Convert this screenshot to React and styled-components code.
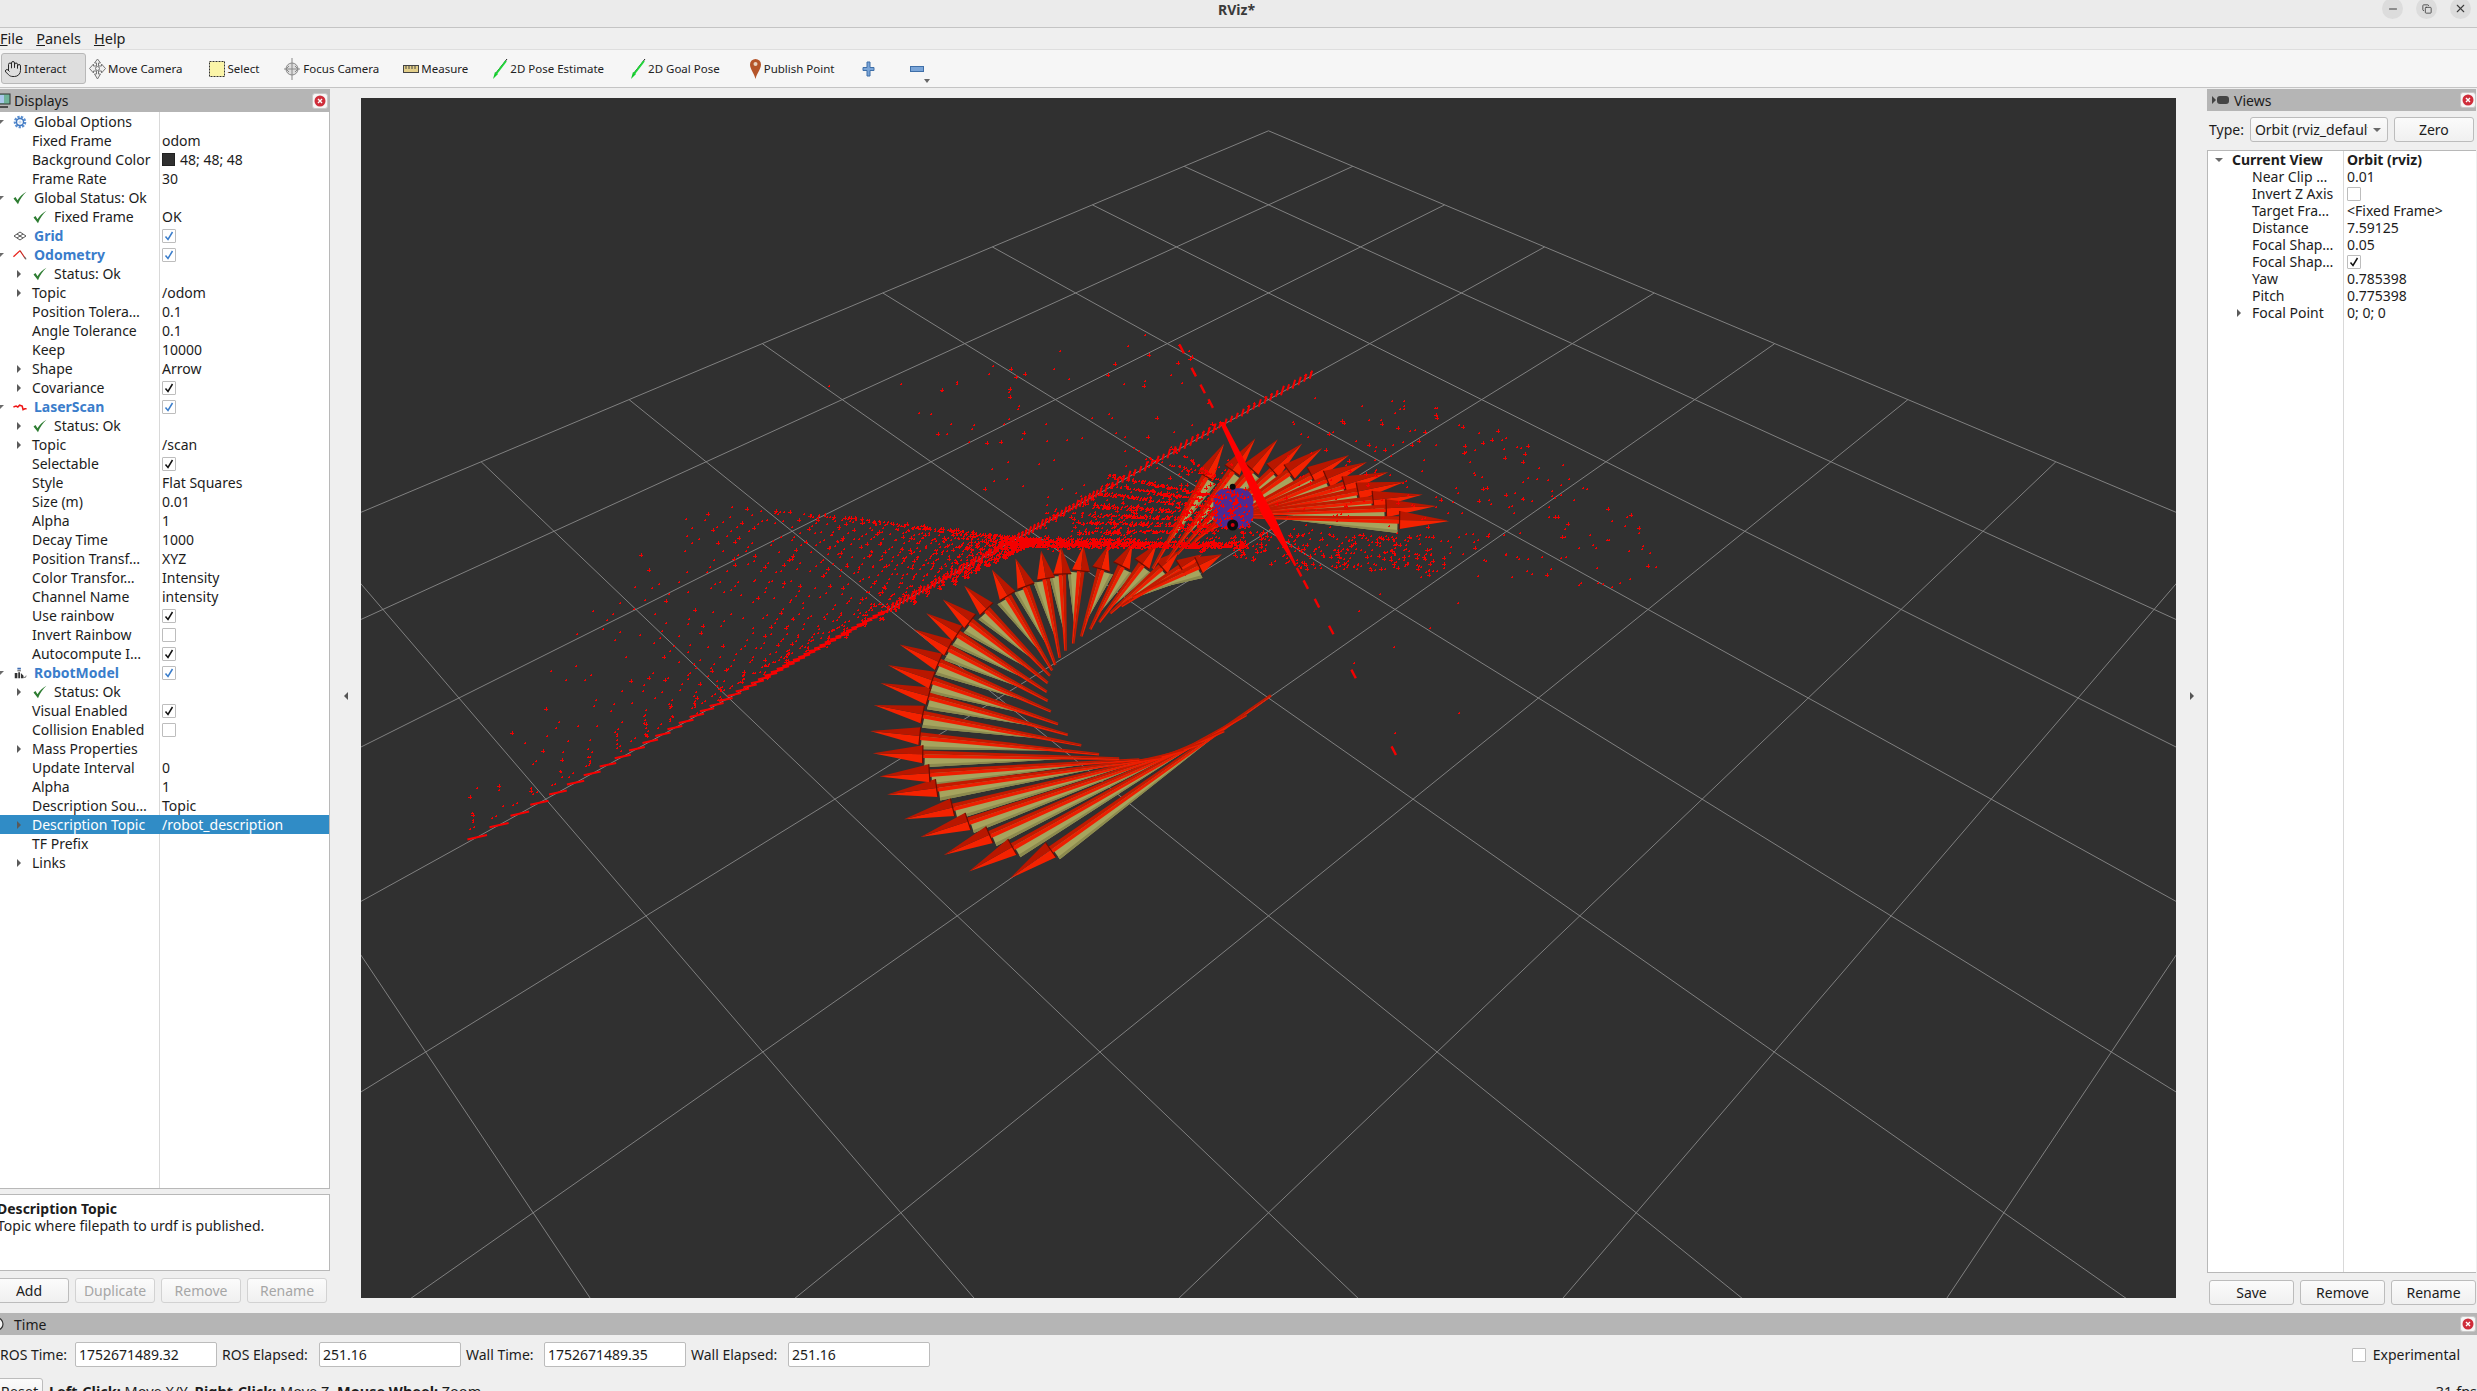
import React from "react";
import styled, { createGlobalStyle } from "styled-components";
import { Minus, X, Copy, Hand } from "lucide-react";

const GlobalStyle = createGlobalStyle`
  html, body { margin: 0; padding: 0; overflow: hidden; background: #efefef; }
  * { box-sizing: border-box; }
`;

const displayRows = [
  { name: "Global Options", top: true, open: true, icon: "gear" },
  { name: "Fixed Frame", value: "odom" },
  { name: "Background Color", color: "#303030", value: "48; 48; 48" },
  { name: "Frame Rate", value: "30" },
  { name: "Global Status: Ok", top: true, open: true, icon: "ok" },
  { name: "Fixed Frame", value: "OK", icon: "ok" },
  { name: "Grid", top: true, blue: true, icon: "grid", check: "blue" },
  { name: "Odometry", top: true, open: true, blue: true, icon: "odom", check: "blue" },
  { name: "Status: Ok", arrow: true, icon: "ok" },
  { name: "Topic", arrow: true, value: "/odom" },
  { name: "Position Tolera…", value: "0.1" },
  { name: "Angle Tolerance", value: "0.1" },
  { name: "Keep", value: "10000" },
  { name: "Shape", arrow: true, value: "Arrow" },
  { name: "Covariance", arrow: true, check: "on" },
  { name: "LaserScan", top: true, open: true, blue: true, icon: "laser", check: "blue" },
  { name: "Status: Ok", arrow: true, icon: "ok" },
  { name: "Topic", arrow: true, value: "/scan" },
  { name: "Selectable", check: "on" },
  { name: "Style", value: "Flat Squares" },
  { name: "Size (m)", value: "0.01" },
  { name: "Alpha", value: "1" },
  { name: "Decay Time", value: "1000" },
  { name: "Position Transf…", value: "XYZ" },
  { name: "Color Transfor…", value: "Intensity" },
  { name: "Channel Name", value: "intensity" },
  { name: "Use rainbow", check: "on" },
  { name: "Invert Rainbow", check: "off" },
  { name: "Autocompute I…", check: "on" },
  { name: "RobotModel", top: true, open: true, blue: true, icon: "robot", check: "blue" },
  { name: "Status: Ok", arrow: true, icon: "ok" },
  { name: "Visual Enabled", check: "on" },
  { name: "Collision Enabled", check: "off" },
  { name: "Mass Properties", arrow: true },
  { name: "Update Interval", value: "0" },
  { name: "Alpha", value: "1" },
  { name: "Description Sou…", value: "Topic" },
  { name: "Description Topic", arrow: true, value: "/robot_description", selected: true },
  { name: "TF Prefix" },
  { name: "Links", arrow: true },
];

const viewRows = [
  { name: "Near Clip …", value: "0.01" },
  { name: "Invert Z Axis", check: "off" },
  { name: "Target Fra…", value: "<Fixed Frame>" },
  { name: "Distance", value: "7.59125" },
  { name: "Focal Shap…", value: "0.05" },
  { name: "Focal Shap…", check: "on" },
  { name: "Yaw", value: "0.785398" },
  { name: "Pitch", value: "0.775398" },
  { name: "Focal Point", value: "0; 0; 0", arrow: true },
];

/* ---------- 3D view data ---------- */

const VW = 1815;
const VH = 1200;

// rviz orbit camera: yaw 0.785398, pitch 0.775398, distance 7.59125, fovy 45deg
const project = (x, y) => {
  const d = 7.59125;
  const cy = Math.cos(0.785398), sy = Math.sin(0.785398);
  const cp = Math.cos(0.775398), sp = Math.sin(0.775398);
  const depth = d - (x * cy * cp + y * sy * cp);
  const up = -x * sp * cy - y * sp * sy;
  const right = -x * sy + y * cy;
  const k = (VH / 2) / Math.tan(Math.PI / 8) / depth;
  return [VW / 2 + right * k, VH / 2 - up * k];
};

const gridLines = [];
for (let i = -5; i <= 5; i++) {
  gridLines.push([project(i, -5), project(i, 5)]);
  gridLines.push([project(-5, i), project(5, i)]);
}

// helpers to turn crop coordinates into viewport coordinates
const Z = (x, y) => [800 + x / 2.24 - 361, 340 + y / 2.8 - 98];
const L = (x, y) => [440 + x / 2.24 - 361, 440 + y / 3 - 98];
const R = (x, y) => [1200 + x / 3 - 361, 340 + y / 3 - 98];
const S = (x, y) => [x * 1.58 - 361, y * 1.58 - 98];

const arrowPairs = [
  [470, 1508, 1055, 995], [378, 1488, 1000, 1050], [322, 1442, 950, 1095], [270, 1392, 900, 1130],
  [233, 1342, 860, 1150], [195, 1273, 810, 1170], [178, 1222, 760, 1175], [163, 1157, 715, 1172],
  [157, 1095, 670, 1160], [165, 1022, 630, 1135], [180, 960, 600, 1105], [197, 910, 578, 1075],
  [223, 853, 562, 1040], [255, 810, 555, 1010], [283, 765, 553, 985], [320, 727, 555, 960],
  [368, 688, 560, 940], [430, 643, 565, 925], [483, 612, 572, 910], [540, 590, 582, 890],
  [585, 580, 595, 870], [635, 575, 612, 850], [690, 575, 630, 830], [745, 570, 650, 810],
  [800, 570, 670, 790], [850, 590, 695, 765], [900, 600, 720, 745], [945, 600, 745, 720],
  [950, 290, 790, 640], [1020, 275, 820, 620], [1070, 278, 845, 600], [1125, 290, 870, 580],
  [1170, 302, 885, 560], [1230, 322, 905, 540], [1270, 342, 925, 525], [1318, 370, 940, 510],
  [1355, 397, 950, 500], [1395, 433, 960, 490], [1425, 465, 970, 490], [1455, 507, 985, 495],
];

const pts = (list) => list.map((p) => `${p[0].toFixed(1)},${p[1].toFixed(1)}`).join(" ");

const arrows = arrowPairs.map(([tx, ty, bx, by]) => {
  const tip = Z(tx, ty);
  const tail = Z(bx, by);
  const dx = tip[0] - tail[0], dy = tip[1] - tail[1];
  const len = Math.hypot(dx, dy);
  const ux = dx / len, uy = dy / len;
  // n is the side of the arrow that faces down on screen
  let nx = -uy, ny = ux;
  if (ny < 0 || (Math.abs(ny) < 0.15 && nx > 0)) { nx = -nx; ny = -ny; }
  const head = Math.min(50, len * 0.26);
  const base = [tip[0] - ux * head, tip[1] - uy * head];
  const end = [base[0] - ux * 2, base[1] - uy * 2];
  const start = [tail[0] + ux * len * 0.15, tail[1] + uy * len * 0.15];
  const at = (p, s) => [p[0] + nx * s, p[1] + ny * s];
  return {
    olive: pts([start, at(end, -1), at(end, 13)]),
    oliveDark: pts([start, at(end, 10), at(end, 13)]),
    shaftLight: pts([tail, at(tail, 1.3), at(base, 3.8), base]),
    shaftDark: pts([tail, at(tail, -1.3), at(base, -3.8), base]),
    headLight: pts([tip, base, at(base, 9)]),
    headDark: pts([tip, base, at(base, -9)]),
    cap: [at(base, -9), at(base, 9)],
  };
});

/* ---------- laser points ---------- */

let seed = 20250716;
const rnd = () => {
  seed = (seed + 0x6d2b79f5) | 0;
  let t = Math.imul(seed ^ (seed >>> 15), 1 | seed);
  t = (t + Math.imul(t ^ (t >>> 7), 61 | t)) ^ t;
  return ((t ^ (t >>> 14)) >>> 0) / 4294967296;
};

const inside = (poly, x, y) => {
  let hit = false;
  for (let i = 0, j = poly.length - 1; i < poly.length; j = i++) {
    const [xi, yi] = poly[i], [xj, yj] = poly[j];
    if (yi > y !== yj > y && x < ((xj - xi) * (y - yi)) / (yj - yi) + xi) hit = !hit;
  }
  return hit;
};

let dotPath = "";
const dot = (x, y, r = 1) => {
  const a = Math.round(x), b = Math.round(y);
  dotPath += `M${a - r} ${b}h${2 * r}M${a} ${b - r}v${2 * r}`;
};

const scatter = (poly, count) => {
  const xs = poly.map((p) => p[0]), ys = poly.map((p) => p[1]);
  const x0 = Math.min(...xs), x1 = Math.max(...xs), y0 = Math.min(...ys), y1 = Math.max(...ys);
  let made = 0, guard = 0;
  while (made < count && guard < count * 60) {
    guard++;
    const x = x0 + rnd() * (x1 - x0), y = y0 + rnd() * (y1 - y0);
    if (!inside(poly, x, y)) continue;
    dot(x, y, rnd() > 0.75 ? 2 : 1);
    made++;
  }
};

const scatterLine = (a, b, count, spread, r = 1) => {
  for (let i = 0; i < count; i++) {
    const t = rnd();
    dot(a[0] + (b[0] - a[0]) * t + (rnd() - 0.5) * spread, a[1] + (b[1] - a[1]) * t + (rnd() - 0.5) * spread, r);
  }
};

// left cloud: a fan of points opening from near the robot towards the wall line
{
  const apex = L(1345, 300);
  const outer = [L(880, 225), L(590, 195), L(455, 330), L(330, 530), L(170, 850), L(65, 1065), L(70, 1150)];
  const wallEnd = L(110, 1175);
  for (let i = 0; i <= 70; i++) {
    const u = (i / 70) * (outer.length - 1);
    const k = Math.min(Math.floor(u), outer.length - 2);
    const f = u - k;
    const e = [outer[k][0] + (outer[k + 1][0] - outer[k][0]) * f, outer[k][1] + (outer[k + 1][1] - outer[k][1]) * f];
    for (let j = 1; j <= 36; j++) {
      const v = Math.pow(j / 36, 2);
      if (rnd() < 0.1 + v * 0.55) continue;
      const x = apex[0] + (e[0] - apex[0]) * v + (rnd() - 0.5) * 5;
      const y = apex[1] + (e[1] - apex[1]) * v + (rnd() - 0.5) * 4;
      if (inside([apex, ...outer, wallEnd], x, y)) dot(x, y, rnd() > 0.82 ? 2 : 1);
    }
  }
}

// right cloud, and the tighter band under the last arrows
scatter([R(300, 170), R(730, 180), R(1060, 350), R(1330, 540), R(1390, 700), R(1240, 745), R(900, 720), R(600, 710), R(400, 700), R(160, 640)], 260);
scatter([R(100, 570), R(700, 590), R(700, 690), R(300, 690), R(100, 650)], 240);
scatter([S(560, 245), S(640, 222), S(737, 200), S(790, 270), S(740, 320), S(640, 328)], 90);
scatter([S(660, 320), S(780, 290), S(790, 345), S(660, 350)], 320);
scatter([R(40, 445), R(160, 445), R(160, 565), R(40, 565)], 90);

// rays from the robot, going left
[380, 405, 430, 465, 490, 512, 538].forEach((y, i) => {
  const a = Z(935, 440 + i * 16);
  const b = Z(690 - i * 10, y);
  scatterLine(a, b, 120, 3.5);
});
[[935, 385, 770, 330], [950, 400, 830, 300], [930, 560, 900, 590]].forEach(([a, b, c, d]) => {
  scatterLine(Z(a, b), Z(c, d), 35, 3);
});

// dense band running into the left cloud
scatterLine(Z(470, 572), Z(1000, 575), 900, 6);
scatterLine(L(1250, 305), L(1568, 305), 300, 7);

// sparse points in the open
[[882, 92], [1330, 860], [1477, 1045], [1333, 1100], [1242, 905], [1412, 805], [1473, 735], [1300, 712], [1252, 760], [65, 130], [352, 117], [266, 205], [385, 248]].forEach(([x, y]) => {
  const p = Z(x, y);
  dot(p[0], p[1]);
});

// the long wall line: flat dashes close to the camera, small upright ticks far away
let wallPath = "";
{
  const a = L(48, 1218);
  const b = S(830, 237);
  const dist = Math.hypot(b[0] - a[0], b[1] - a[1]);
  let s = 18;
  while (s < dist) {
    const t = s / dist;
    const x = a[0] + (b[0] - a[0]) * t, y = a[1] + (b[1] - a[1]) * t;
    if (t < 0.5) {
      const half = 10 - t * 10;
      wallPath += `M${(x - half).toFixed(1)} ${(y + half * 0.22).toFixed(1)}L${(x + half).toFixed(1)} ${(y - half * 0.22).toFixed(1)}`;
      if (rnd() < 0.8) {
        dot(x - 7 * (1 - t), y - 6 - rnd() * 3);
        dot(x - 3 * (1 - t), y - 8 - rnd() * 3);
      }
      s += Math.max(6, 26 * (1 - t / 0.5));
    } else {
      const half = 3 + rnd() * 2;
      wallPath += `M${(x - half * 0.3).toFixed(1)} ${(y + half).toFixed(1)}L${(x + half * 0.3).toFixed(1)} ${(y - half).toFixed(1)}`;
      if (rnd() < 0.5) dot(x, y - 3, 1);
      s += t < 0.75 ? 4.5 : 6.5;
    }
  }
}

// the second wall, seen nearly edge on: dashes at both ends
const dashes = [[855, 25], [882, 90], [902, 137], [920, 178], [1105, 620], [1118, 650], [1133, 685], [1158, 737], [1190, 812], [1240, 935], [1330, 1150]];

/* ---------- styled parts ---------- */

const Page = styled.div`
  width: 2481px;
  height: 1391px;
  margin-left: -4px;
  display: flex;
  flex-direction: column;
  overflow: hidden;
  background: #efefef;
  color: #1c1c1c;
  font-family: "Noto Sans", "Open Sans", sans-serif;
  font-size: 14px;
`;

const TitleBar = styled.div`
  height: 28px;
  flex: none;
  display: grid;
  grid-template-columns: 1fr auto 1fr;
  background: #ebebeb;
  border-bottom: 1px solid #c4c4c4;
`;

const Title = styled.div`
  font-weight: 700;
  font-size: 14px;
  line-height: 19px;
  color: #3a3a3a;
`;

const WindowButtons = styled.div`
  display: flex;
  justify-content: flex-end;
  gap: 13px;
  padding-right: 6px;
  margin-top: -2px;
`;

const WindowButton = styled.div`
  width: 21px;
  height: 21px;
  border-radius: 50%;
  background: #dcdcdc;
  display: flex;
  align-items: center;
  justify-content: center;
  color: #3c3c3c;
`;

const MenuBar = styled.div`
  height: 22px;
  flex: none;
  display: flex;
  gap: 13px;
  padding: 0 0 2px 4px;
  align-items: center;
  background: #efefef;
  border-bottom: 1px solid #dedede;
  font-size: 14.5px;
`;

const MenuItem = styled.span`
  &::first-letter { text-decoration: underline; }
`;

const ToolBar = styled.div`
  height: 38px;
  flex: none;
  display: flex;
  align-items: center;
  padding-left: 5px;
  background: #f6f6f6;
  border-bottom: 1px solid #c4c4c4;
  font-size: 11.5px;
`;

const ToolButton = styled.div`
  height: 31px;
  display: flex;
  align-items: center;
  gap: 2px;
  white-space: nowrap;
  color: #222;
  padding: ${(p) => (p.$active ? "0 14px 0 2px" : p.$tight ? "0 12px 0 2px" : "0 11px")};
  margin-left: ${(p) => p.$ml || 0}px;
  width: ${(p) => (p.$active ? "85px" : "auto")};
  background: ${(p) => (p.$active ? "#dedede" : "transparent")};
  border: 1px solid ${(p) => (p.$active ? "#b8b8b8" : "transparent")};
  border-radius: 3px;
`;

const ToolGap = styled.div`
  position: relative;
  width: ${(p) => p.$w}px;
  margin-left: ${(p) => p.$ml || 0}px;
  display: flex;
  align-items: center;
`;

const MoreArrow = styled.div`
  position: absolute;
  right: -4px;
  bottom: -11px;
  border-left: 3px solid transparent;
  border-right: 3px solid transparent;
  border-top: 4px solid #666;
`;

const Main = styled.div`
  flex: 1;
  min-height: 0;
  display: flex;
`;

const LeftDock = styled.div`
  width: 334px;
  flex: none;
  display: flex;
  flex-direction: column;
  padding-top: 1px;
`;

const DockTitle = styled.div`
  height: ${(p) => p.$h || 23}px;
  flex: none;
  display: flex;
  align-items: center;
  gap: ${(p) => p.$gap || 5}px;
  padding: ${(p) => p.$pad};
  background: #b5b5b5;
  color: #1c1c1c;
`;

const DockLabel = styled.span`
  flex: 1;
`;

const CloseBox = styled.div`
  width: 16px;
  height: 16px;
  border-radius: 3px;
  background: #f6f6f6;
  border: 1px solid #c9c9c9;
  display: flex;
  align-items: center;
  justify-content: center;
`;

const TreePanel = styled.div`
  flex: 1;
  min-height: 0;
  position: relative;
  background: #fff;
  border-right: 1px solid #b8b8b8;
  border-bottom: 1px solid #b8b8b8;
  overflow: hidden;
`;

const ColumnLine = styled.div`
  position: absolute;
  top: 0;
  bottom: 0;
  left: ${(p) => p.$x}px;
  width: 1px;
  background: #d9d9d9;
`;

const Row = styled.div`
  position: relative;
  height: ${(p) => p.$h}px;
  display: flex;
  align-items: center;
  white-space: nowrap;
  background: ${(p) => (p.$selected ? "#308cc6" : "transparent")};
  color: ${(p) => (p.$selected ? "#fff" : "#1c1c1c")};
`;

const NameCell = styled.div`
  width: ${(p) => p.$w}px;
  flex: none;
  height: 100%;
  display: flex;
  align-items: center;
  padding-left: ${(p) => p.$pad}px;
  font-weight: ${(p) => (p.$strong ? 700 : 400)};
  color: ${(p) => (p.$blue ? "#3a7dcb" : "inherit")};
`;

const ValueCell = styled.div`
  flex: 1;
  display: flex;
  align-items: center;
  gap: 5px;
  padding-left: 3px;
  font-weight: ${(p) => (p.$strong ? 700 : 400)};
`;

const ArrowSlot = styled.div`
  width: ${(p) => p.$w || 8}px;
  flex: none;
  display: flex;
  justify-content: center;
`;

const ArrowRight = styled.div`
  border-top: 4px solid transparent;
  border-bottom: 4px solid transparent;
  border-left: 4px solid #5a5a5a;
`;

const ArrowDown = styled.div`
  border-left: 4px solid transparent;
  border-right: 4px solid transparent;
  border-top: 4px solid #6a6a6a;
`;

const IconSlot = styled.div`
  width: 14px;
  height: 14px;
  flex: none;
  margin-left: ${(p) => p.$ml}px;
  margin-right: 7px;
  display: flex;
  align-items: center;
  justify-content: center;
`;

const PlainName = styled.span`
  margin-left: ${(p) => p.$ml || 0}px;
`;

const Box = styled.div`
  width: 14px;
  height: 14px;
  background: #fff;
  border: 1px solid #bdbdbd;
  border-radius: 1px;
  display: flex;
  align-items: center;
  justify-content: center;
`;

const Swatch = styled.div`
  width: 13px;
  height: 13px;
  background: ${(p) => p.$c};
  border: 1px solid #222;
`;

const SplitDots = styled.div`
  height: 5px;
  flex: none;
`;

const HelpBox = styled.div`
  height: 77px;
  flex: none;
  background: #fff;
  border: 1px solid #b8b8b8;
  border-left: none;
  padding: 5px 0 0 1px;
  line-height: 17px;
`;

const HelpTitle = styled.div`
  font-weight: 700;
`;

const ButtonRow = styled.div`
  flex: none;
  display: grid;
  grid-template-columns: ${(p) => p.$cols};
  gap: 6px;
  padding: ${(p) => p.$pad};
  margin-left: ${(p) => p.$ml || 0}px;
`;

const PushButton = styled.div`
  height: 25px;
  display: flex;
  align-items: center;
  justify-content: center;
  border: 1px solid ${(p) => (p.$off ? "#d2d2d2" : "#bcbcbc")};
  border-radius: 3px;
  background: linear-gradient(#fbfbfb, #f0f0f0);
  color: ${(p) => (p.$off ? "#a6a6a6" : "#1c1c1c")};
`;

const SideStrip = styled.div`
  width: 31px;
  flex: none;
  display: flex;
  align-items: center;
  justify-content: center;
  padding-bottom: 9px;
`;

const StripLeft = styled.div`
  border-top: 4px solid transparent;
  border-bottom: 4px solid transparent;
  border-right: 4px solid #555;
`;

const StripRight = styled.div`
  border-top: 4px solid transparent;
  border-bottom: 4px solid transparent;
  border-left: 4px solid #555;
`;

const Viewport = styled.div`
  width: ${VW}px;
  height: ${VH}px;
  flex: none;
  margin-top: 10px;
  background: #303030;
`;

const RightDock = styled.div`
  flex: 1;
  min-width: 0;
  display: flex;
  flex-direction: column;
  padding-top: 1px;
  padding-right: 1px;
`;

const TypeRow = styled.div`
  flex: none;
  height: 25px;
  margin: 6px 0 8px;
  padding-left: 2px;
  display: flex;
  align-items: center;
  gap: 6px;
`;

const ComboBox = styled.div`
  width: 138px;
  height: 25px;
  display: flex;
  align-items: center;
  padding: 0 6px 0 4px;
  gap: 5px;
  border: 1px solid #bcbcbc;
  border-radius: 3px;
  background: linear-gradient(#fbfbfb, #f0f0f0);
  overflow: hidden;
  white-space: nowrap;
`;

const ComboText = styled.span`
  flex: 1;
  overflow: hidden;
`;

const ZeroButton = styled(PushButton)`
  width: 80px;
`;

const ViewsTree = styled(TreePanel)`
  border: 1px solid #b8b8b8;
  border-right: none;
`;

const TimeDock = styled.div`
  height: 78px;
  flex: none;
  display: flex;
  flex-direction: column;
`;

const TimeRow = styled.div`
  margin-top: 7px;
  height: 25px;
  flex: none;
  display: flex;
  align-items: center;
  gap: 5px;
  padding-left: 4px;
`;

const TimeLabel = styled.span`
  width: ${(p) => p.$w}px;
  white-space: nowrap;
`;

const TimeInput = styled.div`
  width: 142px;
  height: 25px;
  display: flex;
  align-items: center;
  padding-left: 3px;
  background: #fff;
  border: 1px solid #bcbcbc;
  border-radius: 2px;
`;

const Experimental = styled.div`
  margin-left: auto;
  padding-right: 17px;
  display: flex;
  align-items: center;
  gap: 7px;
`;

const StatusRow = styled.div`
  margin-top: 11px;
  height: 25px;
  flex: none;
  display: flex;
  align-items: center;
  gap: 6px;
  font-size: 14.5px;
`;

const ResetButton = styled(PushButton)`
  width: 47px;
`;

const Fps = styled.span`
  margin-left: auto;
`;

const ClockSvg = styled.svg`
  margin-left: -6px;
  flex: none;
`;

/* ---------- icons ---------- */

const CloseIcon = () => (
  <CloseBox>
    <svg width="12" height="12" viewBox="0 0 12 12">
      <circle cx="6" cy="6" r="5.5" fill="#cf2d3a" />
      <path d="M4 4l4 4M8 4l-4 4" stroke="#fff" strokeWidth="1.4" />
    </svg>
  </CloseBox>
);

const OkIcon = () => (
  <svg width="14" height="14" viewBox="0 0 14 14">
    <path d="M0.500 7.500l2-1.500 2 3.200C6.500 6 9.500 3 13.500 0.800 10 4 7 8 5 13.200z" fill="#2e7d32" />
  </svg>
);

const GearIcon = () => (
  <svg width="14" height="14" viewBox="0 0 14 14">
    <circle cx="7" cy="7" r="5" fill="none" stroke="#5b8fd0" strokeWidth="2.6" strokeDasharray="2.200 1.200" />
    <circle cx="7" cy="7" r="3.500" fill="none" stroke="#3f78c0" strokeWidth="1.400" />
    <circle cx="7" cy="7" r="1.600" fill="#c7d9ef" />
  </svg>
);

const GridIcon = () => (
  <svg width="14" height="10" viewBox="0 0 14 10" fill="none" stroke="#555" strokeWidth="1">
    <path d="M7 1l6 4-6 4-6-4zM4 3l6 4M10 3L4 7" />
  </svg>
);

const OdomIcon = () => (
  <svg width="16" height="12" viewBox="0 0 16 12" fill="none">
    <path d="M0.500 8L8 1" stroke="#e8221a" strokeWidth="1.500" />
    <path d="M8 1l6 9" stroke="#c8221a" strokeWidth="1.300" />
    <path d="M13 8l2 3" stroke="#666" strokeWidth="1.200" />
  </svg>
);

const LaserIcon = () => (
  <svg width="16" height="10" viewBox="0 0 16 10" fill="none">
    <path d="M0.500 5l3-1 2 1 2-2 3 1 1 4 2-1h2" stroke="#ee1515" strokeWidth="1.800" />
  </svg>
);

const RobotIcon = () => (
  <svg width="16" height="14" viewBox="0 0 16 14">
    <rect x="5" y="1" width="4" height="2" fill="#3d6bb0" />
    <rect x="5" y="4" width="4" height="1" fill="#333" />
    <path d="M2 7h3v6H2zM6 6h2v7H6zM9 7l3 3v3H9z" fill="#333" />
    <path d="M12 12q3 1 3-2" stroke="#666" fill="none" />
  </svg>
);

const MonitorIcon = () => (
  <svg width="16" height="16" viewBox="0 0 16 16">
    <rect x="1" y="1" width="13" height="10" fill="#6fb39a" stroke="#333" />
    <rect x="2" y="2" width="6" height="8" fill="#a9c7ea" />
    <path d="M4 14h8" stroke="#333" strokeWidth="1.600" />
  </svg>
);

const ClockIcon = () => (
  <ClockSvg width="14" height="14" viewBox="0 0 14 14" fill="#f4f4f4" stroke="#333" strokeWidth="1.200">
    <circle cx="7" cy="7" r="6" />
    <path d="M4 7h6" />
  </ClockSvg>
);

const CameraIcon = () => (
  <svg width="17" height="10" viewBox="0 0 17 10">
    <path d="M0 1l4 4-4 4z" fill="#444" />
    <rect x="5" y="1" width="12" height="8" rx="3" fill="#444" />
  </svg>
);

const TickIcon = ({ color }) => (
  <svg width="10" height="10" viewBox="0 0 10 10" fill="none">
    <path d="M1.500 5.500L4 8.500 8.500 1" stroke={color} strokeWidth="1.500" />
  </svg>
);

const MoveIcon = () => (
  <svg width="17" height="22" viewBox="0 0 17 22" fill="#eee" stroke="#777">
    <path d="M8.500 1l3 4h-2v3h3V6l4 4.500-4 4.500v-2h-3v3h2l-3 5-3-5h2v-3h-3v2l-4-4.500 4-4.500v2h3V5h-2z" />
    <circle cx="8.500" cy="10.500" r="2" />
  </svg>
);

const SelectIcon = () => (
  <svg width="16" height="16" viewBox="0 0 16 16">
    <rect x="0.500" y="0.500" width="15" height="15" fill="#fbf5a8" stroke="#333" strokeDasharray="2 1" />
  </svg>
);

const FocusIcon = () => (
  <svg width="18" height="24" viewBox="0 0 18 24" fill="none" stroke="#888">
    <circle cx="9" cy="12" r="6" fill="#ddd" />
    <path d="M9 1v22M1 12h16M3 12l3-3M15 12l-3-3M3 12l3 3M15 12l-3 3" />
  </svg>
);

const RulerIcon = () => (
  <svg width="16" height="8" viewBox="0 0 16 8">
    <rect x="0.500" y="0.500" width="15" height="7" fill="#e3cf8a" stroke="#444" />
    <path d="M3 1v3M6 1v3M9 1v3M12 1v3" stroke="#444" />
  </svg>
);

const PoseIcon = () => (
  <svg width="16" height="22" viewBox="0 0 16 22">
    <path d="M1 21l2-7 3 2z" fill="#12c92b" />
    <path d="M4 15L15 1" stroke="#1a1a1a" strokeWidth="1" />
    <path d="M4 16L14 3" stroke="#20d83a" strokeWidth="2" />
  </svg>
);

const PinIcon = () => (
  <svg width="13" height="22" viewBox="0 0 13 22">
    <path d="M6.500 21C5 15 1 11 1 6.500a5.500 5.500 0 0 1 11 0C12 11 8 15 6.500 21z" fill="#b5552a" />
    <circle cx="6.500" cy="6" r="2" fill="#e8d2c0" />
  </svg>
);

const PlusIcon = () => (
  <svg width="13" height="16" viewBox="0 0 13 16">
    <path d="M5 1h3v5.500h4v3H8V15H5V9.500H1v-3h4z" fill="#7aa5d8" stroke="#3f6fa8" />
  </svg>
);

const MinusIcon = () => (
  <svg width="14" height="6" viewBox="0 0 14 6">
    <rect x="0.500" y="0.500" width="13" height="5" fill="#7aa5d8" stroke="#3f6fa8" />
  </svg>
);

const rowIcons = {
  ok: <OkIcon />,
  gear: <GearIcon />,
  grid: <GridIcon />,
  odom: <OdomIcon />,
  laser: <LaserIcon />,
  robot: <RobotIcon />,
};

const CheckBox = ({ state }) => (
  <Box>
    {state === "on" && <TickIcon color="#111" />}
    {state === "blue" && <TickIcon color="#3a7dcb" />}
  </Box>
);

/* ---------- sections ---------- */

const DisplayRow = ({ row }) => {
  const depth = row.top ? 0 : 1;
  return (
    <Row $h={19} $selected={row.selected}>
      <NameCell $w={163} $pad={depth ? 19 : 0} $blue={row.blue} $strong={row.blue}>
        <ArrowSlot>{row.open ? <ArrowDown /> : row.arrow ? <ArrowRight /> : null}</ArrowSlot>
        {row.icon ? <IconSlot $ml={depth ? 10 : 9}>{rowIcons[row.icon]}</IconSlot> : <PlainName $ml={9}>{row.name}</PlainName>}
        {row.icon && row.name}
      </NameCell>
      <ValueCell>
        {row.color && <Swatch $c={row.color} />}
        {row.value}
        {row.check && <CheckBox state={row.check} />}
      </ValueCell>
    </Row>
  );
};

const Scene = () => (
  <svg width={VW} height={VH} viewBox={`0 0 ${VW} ${VH}`} style={{ display: "block" }}>
    {gridLines.map(([a, b], i) => (
      <line key={i} x1={a[0]} y1={a[1]} x2={b[0]} y2={b[1]} stroke="#808080" strokeWidth="1" />
    ))}
    {arrows.map((a, i) => (
      <g key={i}>
        <polygon points={a.olive} fill="#a6a45e" />
        <polygon points={a.oliveDark} fill="#8c8a4e" />
      </g>
    ))}
    {arrows.map((a, i) => (
      <g key={i}>
        <polygon points={a.shaftLight} fill="#ee1e00" />
        <polygon points={a.shaftDark} fill="#c21a00" />
        <polygon points={a.headLight} fill="#f42200" />
        <polygon points={a.headDark} fill="#b81700" />
        <line x1={a.cap[0][0]} y1={a.cap[0][1]} x2={a.cap[1][0]} y2={a.cap[1][1]} stroke="#6d0d00" strokeWidth="1.200" />
      </g>
    ))}
    <rect x={R(40, 0)[0]} y={R(0, 445)[1]} width="40" height="40" rx="13" fill="#4f2a90" />
    <path d={wallPath} stroke="#f80000" strokeWidth="2" fill="none" />
    <path d={dotPath} stroke="#f40000" strokeWidth="1" fill="none" shapeRendering="crispEdges" />
    <polygon points={pts([Z(940, 230), Z(950, 230), Z(1065, 500), Z(1110, 625), Z(1105, 625), Z(1035, 490)])} fill="#ff0000" />
    {dashes.map(([x, y], i) => {
      const a = Z(x - 5, y - 12);
      const b = Z(x + 5, y + 12);
      return <line key={i} x1={a[0]} y1={a[1]} x2={b[0]} y2={b[1]} stroke="#f40000" strokeWidth="2.400" />;
    })}
    <circle cx={R(98, 0)[0]} cy={R(0, 555)[1]} r="5.500" fill="#0a0a0a" />
    <circle cx={R(98, 0)[0]} cy={R(0, 555)[1]} r="2" fill="#d00010" />
    <circle cx={R(98, 0)[0]} cy={R(0, 440)[1]} r="3" fill="#0a0a0a" />
  </svg>
);

export default function App() {
  return (
    <Page>
      <GlobalStyle />
      <TitleBar>
        <span />
        <Title>RViz*</Title>
        <WindowButtons>
          <WindowButton><Minus size={12} /></WindowButton>
          <WindowButton><Copy size={10} /></WindowButton>
          <WindowButton><X size={13} /></WindowButton>
        </WindowButtons>
      </TitleBar>
      <MenuBar>
        <MenuItem>File</MenuItem>
        <MenuItem>Panels</MenuItem>
        <MenuItem>Help</MenuItem>
      </MenuBar>
      <ToolBar>
        <ToolButton $active><Hand size={18} strokeWidth={1.3} />Interact</ToolButton>
        <ToolButton $tight><MoveIcon />Move Camera</ToolButton>
        <ToolButton $ml={2}><SelectIcon />Select</ToolButton>
        <ToolButton><FocusIcon />Focus Camera</ToolButton>
        <ToolButton><RulerIcon />Measure</ToolButton>
        <ToolButton><PoseIcon />2D Pose Estimate</ToolButton>
        <ToolButton $ml={2}><PoseIcon />2D Goal Pose</ToolButton>
        <ToolButton $ml={5}><PinIcon />Publish Point</ToolButton>
        <ToolGap $w={48} $ml={15}><PlusIcon /></ToolGap>
        <ToolGap $w={16}><MinusIcon /><MoreArrow /></ToolGap>
      </ToolBar>
      <Main>
        <LeftDock>
          <DockTitle $pad="0 2px 0 0" $gap={2}>
            <MonitorIcon />
            <DockLabel>Displays</DockLabel>
            <CloseIcon />
          </DockTitle>
          <TreePanel>
            <ColumnLine $x={163} />
            {displayRows.map((row, i) => (
              <DisplayRow key={i} row={row} />
            ))}
          </TreePanel>
          <SplitDots />
          <HelpBox>
            <HelpTitle>Description Topic</HelpTitle>
            Topic where filepath to urdf is published.
          </HelpBox>
          <ButtonRow $cols="80px 80px 80px 80px" $pad="7px 0 10px 0" $ml={-7}>
            <PushButton>Add</PushButton>
            <PushButton $off>Duplicate</PushButton>
            <PushButton $off>Remove</PushButton>
            <PushButton $off>Rename</PushButton>
          </ButtonRow>
        </LeftDock>
        <SideStrip><StripLeft /></SideStrip>
        <Viewport><Scene /></Viewport>
        <SideStrip><StripRight /></SideStrip>
        <RightDock>
          <DockTitle $h={22} $pad="0 0 0 5px" $gap={5}>
            <CameraIcon />
            <DockLabel>Views</DockLabel>
            <CloseIcon />
          </DockTitle>
          <TypeRow>
            Type:
            <ComboBox>
              <ComboText>Orbit (rviz_default</ComboText>
              <ArrowDown />
            </ComboBox>
            <ZeroButton>Zero</ZeroButton>
          </TypeRow>
          <ViewsTree>
            <ColumnLine $x={135} />
            <Row $h={17}>
              <NameCell $w={136} $pad={6} $strong>
                <ArrowSlot $w={10}><ArrowDown /></ArrowSlot>
                <PlainName $ml={8}>Current View</PlainName>
              </NameCell>
              <ValueCell $strong>Orbit (rviz)</ValueCell>
            </Row>
            {viewRows.map((row, i) => (
              <Row $h={17} key={i}>
                <NameCell $w={136} $pad={row.arrow ? 27 : 44}>
                  {row.arrow && <ArrowSlot $w={7}><ArrowRight /></ArrowSlot>}
                  <PlainName $ml={row.arrow ? 10 : 0}>{row.name}</PlainName>
                </NameCell>
                <ValueCell>
                  {row.value}
                  {row.check && <CheckBox state={row.check} />}
                </ValueCell>
              </Row>
            ))}
          </ViewsTree>
          <ButtonRow $cols="85px 85px 85px" $pad="7px 0 8px 2px">
            <PushButton>Save</PushButton>
            <PushButton>Remove</PushButton>
            <PushButton>Rename</PushButton>
          </ButtonRow>
        </RightDock>
      </Main>
      <TimeDock>
        <DockTitle $h={22} $pad="0 1px 0 0" $gap={10}>
          <ClockIcon />
          <DockLabel>Time</DockLabel>
          <CloseIcon />
        </DockTitle>
        <TimeRow>
          <TimeLabel $w={70}>ROS Time:</TimeLabel>
          <TimeInput>1752671489.32</TimeInput>
          <TimeLabel $w={92}>ROS Elapsed:</TimeLabel>
          <TimeInput>251.16</TimeInput>
          <TimeLabel $w={73}>Wall Time:</TimeLabel>
          <TimeInput>1752671489.35</TimeInput>
          <TimeLabel $w={92}>Wall Elapsed:</TimeLabel>
          <TimeInput>251.16</TimeInput>
          <Experimental>
            <Box />
            Experimental
          </Experimental>
        </TimeRow>
        <StatusRow>
          <ResetButton>Reset</ResetButton>
          <span>
            <b>Left-Click:</b> Move X/Y. <b>Right-Click:</b> Move Z. <b>Mouse Wheel:</b> Zoom.
          </span>
          <Fps>31 fps</Fps>
        </StatusRow>
      </TimeDock>
    </Page>
  );
}
